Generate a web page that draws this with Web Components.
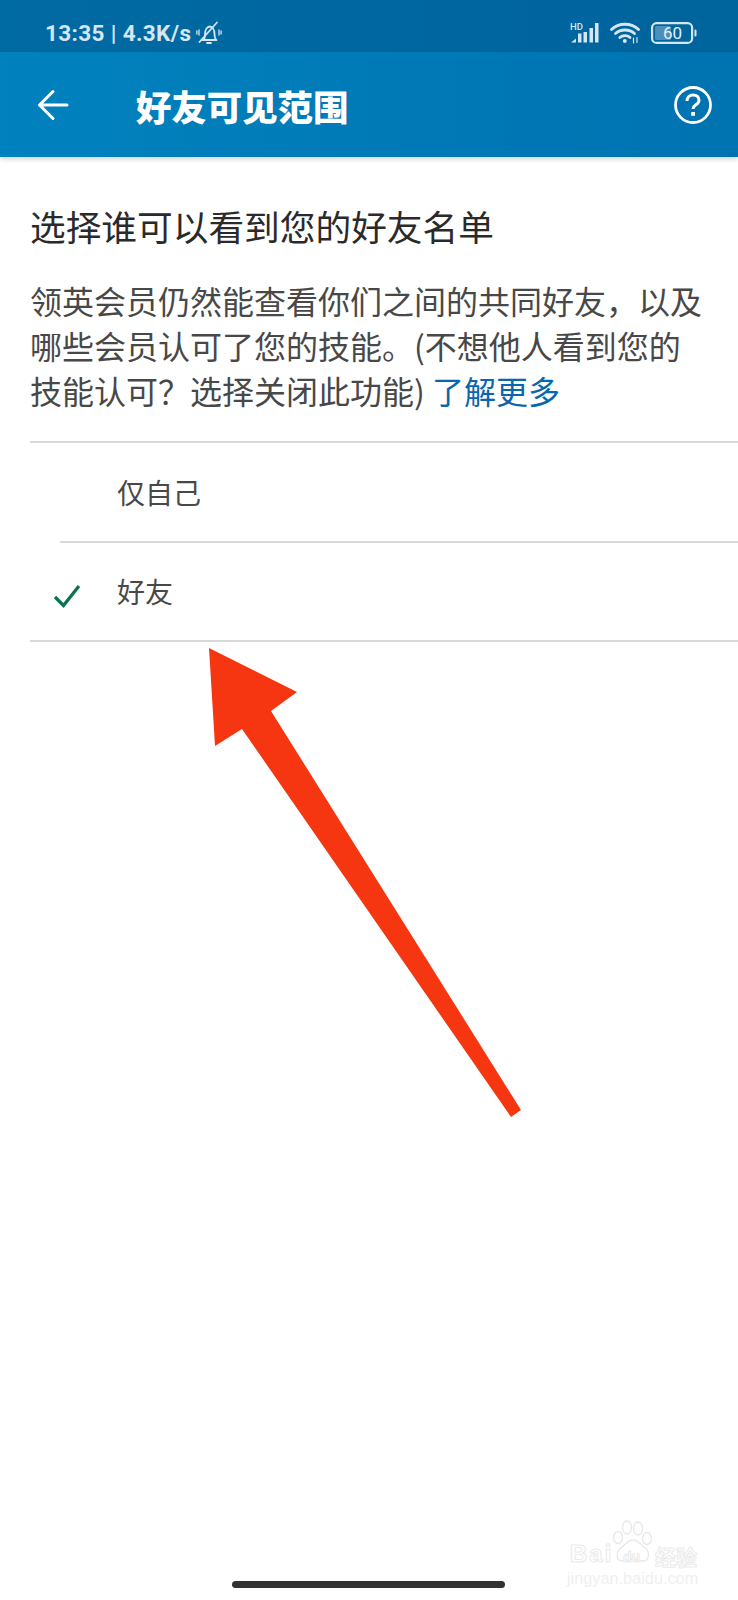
<!DOCTYPE html>
<html lang="zh">
<head>
<meta charset="utf-8">
<title>好友可见范围</title>
<style>
    html, body {
        margin: 0;
        height: 1600px;
        background: #ffffff;
        font-family: Roboto, "Noto Sans CJK SC", sans-serif;
    }

    body {
        display: flex;
        flex-direction: column;
        position: relative;
        overflow: hidden;
    }
</style>
</head>
<body>
<status-bar></status-bar>
<app-header heading="好友可见范围"></app-header>
<intro-block heading="选择谁可以看到您的好友名单">
    <span>领英会员仍然能查看你们之间的共同好友，以及哪些会员认可了您的技能。(不想他人看到您的</span><span>技能认可？选择关闭此功能) </span><a slot="more">了解更多</a>
</intro-block>
<option-list>
    <option-row label="仅自己"></option-row>
    <option-row label="好友" selected></option-row>
</option-list>
<red-arrow></red-arrow>
<baidu-mark></baidu-mark>
<home-bar></home-bar>

<script>
class StatusBar extends HTMLElement {
    constructor() {
        super();
        this.attachShadow({ mode: 'open' });
    }

    connectedCallback() {
        this.shadowRoot.innerHTML = `
      <style>
        :host {
          display: flex;
          align-items: center;
          justify-content: space-between;
          height: 52px;
          flex-shrink: 0;
          padding: 13px 41px 0 45px;
          box-sizing: border-box;
          background: linear-gradient(90deg, #006aa3, #00649d);
          color: #d5e6f1;
          font-family: Roboto, sans-serif;
          font-size: 22.5px;
          font-weight: 700;
        }

        .left, .right {
          display: flex;
          align-items: center;
        }

        .speed {
          letter-spacing: 0.35px;
        }

        .bell {
          margin-left: 5px;
        }

        .signal, .wifi {
          margin-right: 11px;
        }

        svg {
          display: block;
        }

        .battery-num {
          font-family: Roboto, sans-serif;
          font-size: 17px;
          font-weight: 400;
        }
      </style>
      <div class="left">
        <span class="speed">13:35 | 4.3K/s</span>
        <svg class="bell" width="26" height="26" viewBox="0 0 26 26" fill="none" stroke="#d5e6f1" stroke-width="1.8" stroke-linejoin="round" stroke-linecap="round">
          <path d="M5.5 20h15M7.5 20c1.6-1.8 1.6-4 1.6-6.500 0-3.200 1.700-6.500 4.400-7 3 .3 4.900 3.300 4.900 6.500 0 2.700.2 5 1.600 7"/>
          <path d="M11 23h4"/>
          <path d="M3.500 22 21 2.500"/>
          <path d="M3 10v5M.9 11v3M23 10v5M25.100 11v3" stroke-width="1.300"/>
        </svg>
      </div>
      <div class="right">
        <svg class="signal" width="29" height="21" viewBox="0 0 29 21">
          <text x="0" y="8" font-family="Roboto, sans-serif" font-size="9.500" font-weight="500" fill="#d5e6f1">HD</text>
          <path fill="#d5e6f1" d="M1 20.500 6 16.500V20.500zM8 11.500h3.500v9H8zM13.500 10h3.500v10.500h-3.500zM19.500 6h3.500v14.500h-3.500zM25 1h3.500v19.500H25z"/>
        </svg>
        <svg class="wifi" width="30" height="22" viewBox="0 0 30 22" fill="none" stroke="#d5e6f1" stroke-width="2.800" stroke-linecap="round">
          <path d="M1.500 7.500C8.500 .5 21.500 .5 28.500 7.500"/>
          <path d="M5.500 11.500C10.500 6.800 19.500 6.800 24.500 11.500"/>
          <path d="M9.800 15.500C12.500 13 17.500 13 20 15.500"/>
          <circle cx="14.800" cy="19" r="2" fill="#d5e6f1" stroke="none"/>
          <path d="M23.500 16v5M27 15.500v5" stroke-width="1.200"/>
        </svg>
        <svg width="46" height="22" viewBox="0 0 46 22">
          <rect x="1.100" y="1.100" width="40" height="19.800" rx="4.500" fill="none" stroke="#d5e6f1" stroke-width="2.200"/>
          <rect x="4" y="4" width="16" height="14" rx="1.500" fill="#4d8fbc"/>
          <rect x="43.500" y="7.500" width="2" height="7" rx="1" fill="#d5e6f1"/>
          <text x="21.500" y="17" text-anchor="middle" class="battery-num" fill="#e4eff6">60</text>
        </svg>
      </div>
    `;
    }
}

class AppHeader extends HTMLElement {
    constructor() {
        super();
        this.attachShadow({ mode: 'open' });
    }

    connectedCallback() {
        const heading = this.getAttribute('heading') || '';

        this.shadowRoot.innerHTML = `
      <style>
        :host {
          display: flex;
          align-items: center;
          height: 105px;
          flex-shrink: 0;
          box-sizing: border-box;
          padding: 0 26px 0 37px;
          background: linear-gradient(90deg, #0082be, #0073b1);
          box-shadow: 0 2px 5px rgba(0, 0, 0, 0.18);
          color: #ffffff;
          position: relative;
        }

        svg {
          display: block;
          flex-shrink: 0;
        }

        h1 {
          flex: 1;
          margin: 2px 0 0 67px;
          font-family: "Noto Sans CJK SC", sans-serif;
          font-size: 35.400px;
          font-weight: 900;
          line-height: 1;
        }
      </style>
      <svg width="32" height="32" viewBox="0 0 32 32" fill="none" stroke="#ffffff" stroke-width="3" stroke-linecap="round" stroke-linejoin="round">
        <path d="M30 16H2.500M16 2.500 2.500 16 16 29.500"/>
      </svg>
      <h1>${heading}</h1>
      <svg width="38" height="38" viewBox="0 0 38 38" fill="none" stroke="#ffffff">
        <circle cx="19" cy="19" r="17.500" stroke-width="2.800"/>
        <path d="M13 15c0-3.800 2.600-6 6.100-6 3.500 0 5.900 2.200 5.900 5.200 0 4.600-6 4.600-6 8.800" stroke-width="3"/>
        <rect x="17.200" y="26" width="3.800" height="3.800" fill="#ffffff" stroke="none"/>
      </svg>
    `;
    }
}

class IntroBlock extends HTMLElement {
    constructor() {
        super();
        this.attachShadow({ mode: 'open' });
    }

    connectedCallback() {
        const heading = this.getAttribute('heading') || '';

        this.shadowRoot.innerHTML = `
      <style>
        :host {
          display: block;
          padding: 47px 30px 0 30px;
          font-family: "Noto Sans CJK SC", sans-serif;
        }

        h2 {
          margin: 0;
          color: #2a2a2a;
          font-size: 35.700px;
          font-weight: 400;
          line-height: 44px;
        }

        p {
          margin: 30px 0 0 0;
          color: #484848;
          font-size: 32px;
          font-weight: 400;
          line-height: 45px;
        }

        ::slotted(a) {
          color: #0a66ad;
        }
      </style>
      <h2>${heading}</h2>
      <p><slot></slot><slot name="more"></slot></p>
    `;
    }
}

class OptionList extends HTMLElement {
    constructor() {
        super();
        this.attachShadow({ mode: 'open' });
    }

    connectedCallback() {
        this.shadowRoot.innerHTML = `
      <style>
        :host {
          display: block;
          margin: 28px 0 0 30px;
          border-top: 2px solid #d9d9d9;
          border-bottom: 2px solid #d9d9d9;
        }
      </style>
      <slot></slot>
    `;
    }
}

class OptionRow extends HTMLElement {
    constructor() {
        super();
        this.attachShadow({ mode: 'open' });
    }

    connectedCallback() {
        const label = this.getAttribute('label') || '';
        const selected = this.hasAttribute('selected');

        this.shadowRoot.innerHTML = `
      <style>
        :host {
          display: block;
          padding-left: 30px;
        }

        .row {
          display: flex;
          align-items: center;
          height: 97px;
          box-sizing: border-box;
          padding-bottom: 1px;
        }

        :host(:not(:last-child)) .row {
          height: 100px;
          border-bottom: 2px solid #d9d9d9;
        }

        .check {
          width: 64px;
          margin-left: -7px;
          flex-shrink: 0;
        }

        svg {
          display: block;
          margin-top: 10px;
        }

        span {
          color: #484848;
          font-family: "Noto Sans CJK SC", sans-serif;
          font-size: 28px;
          line-height: 40px;
        }
      </style>
      <div class="row">
        <div class="check">
          ${selected ? `
          <svg width="28" height="24" viewBox="0 0 28 24" fill="none" stroke="#0d7450" stroke-width="3.300">
            <path d="M2 13 10.500 21.500 26 2"/>
          </svg>` : ''}
        </div>
        <span>${label}</span>
      </div>
    `;
    }
}

class RedArrow extends HTMLElement {
    constructor() {
        super();
        this.attachShadow({ mode: 'open' });
    }

    connectedCallback() {
        this.shadowRoot.innerHTML = `
      <style>
        :host {
          position: absolute;
          left: 0;
          top: 0;
          width: 738px;
          height: 1600px;
          display: block;
          pointer-events: none;
        }
      </style>
      <svg width="738" height="1600" viewBox="0 0 738 1600">
        <polygon fill="#f63610" points="209,648 297,692 271,711 521,1110 511,1117 242,729 215,746"/>
      </svg>
    `;
    }
}

class BaiduMark extends HTMLElement {
    constructor() {
        super();
        this.attachShadow({ mode: 'open' });
    }

    connectedCallback() {
        this.shadowRoot.innerHTML = `
      <style>
        :host {
          position: absolute;
          left: 555px;
          top: 1520px;
          display: block;
          width: 145px;
          height: 68px;
          color: #ffffff;
        }

        svg {
          position: absolute;
          left: 0;
          top: 0;
        }

        .brand, .du, .zh, .url {
          position: absolute;
          white-space: nowrap;
          line-height: 1;
          -webkit-text-stroke: 1px #ebebeb;
        }

        .brand {
          left: 15px;
          top: 20px;
          font: 700 24px "Liberation Sans", sans-serif;
          letter-spacing: 2px;
        }

        .du {
          left: 68px;
          top: 29px;
          font: 700 14px "Liberation Sans", sans-serif;
        }

        .zh {
          left: 100px;
          top: 21px;
          font: 700 21px "Noto Sans CJK SC", sans-serif;
        }

        .url {
          left: 12px;
          top: 49px;
          font: 400 16.300px "Liberation Sans", sans-serif;
          color: #f0f0f0;
          -webkit-text-stroke: 0;
        }
      </style>
      <svg width="145" height="68" viewBox="0 0 145 68" fill="none" stroke="#e8e8e8" stroke-width="1.300">
        <ellipse cx="72" cy="7.500" rx="4.500" ry="6.500"/>
        <ellipse cx="83" cy="8.500" rx="4.500" ry="6.500"/>
        <ellipse cx="63" cy="17.500" rx="4.500" ry="6"/>
        <ellipse cx="92" cy="18.500" rx="4.500" ry="6"/>
        <path d="M68 41c-7 0-8-9-1-14 4-3 6-7 11-7s7 4 11 7c7 5 5 14-1 14-4 0-7-2-10-2s-6 2-10 2z"/>
      </svg>
      <span class="brand">Bai</span>
      <span class="du">du</span>
      <span class="zh">经验</span>
      <span class="url">jingyan.baidu.com</span>
    `;
    }
}

class HomeBar extends HTMLElement {
    constructor() {
        super();
        this.attachShadow({ mode: 'open' });
    }

    connectedCallback() {
        this.shadowRoot.innerHTML = `
      <style>
        :host {
          position: absolute;
          left: 232px;
          top: 1581px;
          display: block;
          width: 273px;
          height: 7px;
          border-radius: 4px;
          background: #333333;
        }
      </style>
    `;
    }
}

customElements.define('status-bar', StatusBar);
customElements.define('app-header', AppHeader);
customElements.define('intro-block', IntroBlock);
customElements.define('option-list', OptionList);
customElements.define('option-row', OptionRow);
customElements.define('red-arrow', RedArrow);
customElements.define('baidu-mark', BaiduMark);
customElements.define('home-bar', HomeBar);
</script>
</body>
</html>
